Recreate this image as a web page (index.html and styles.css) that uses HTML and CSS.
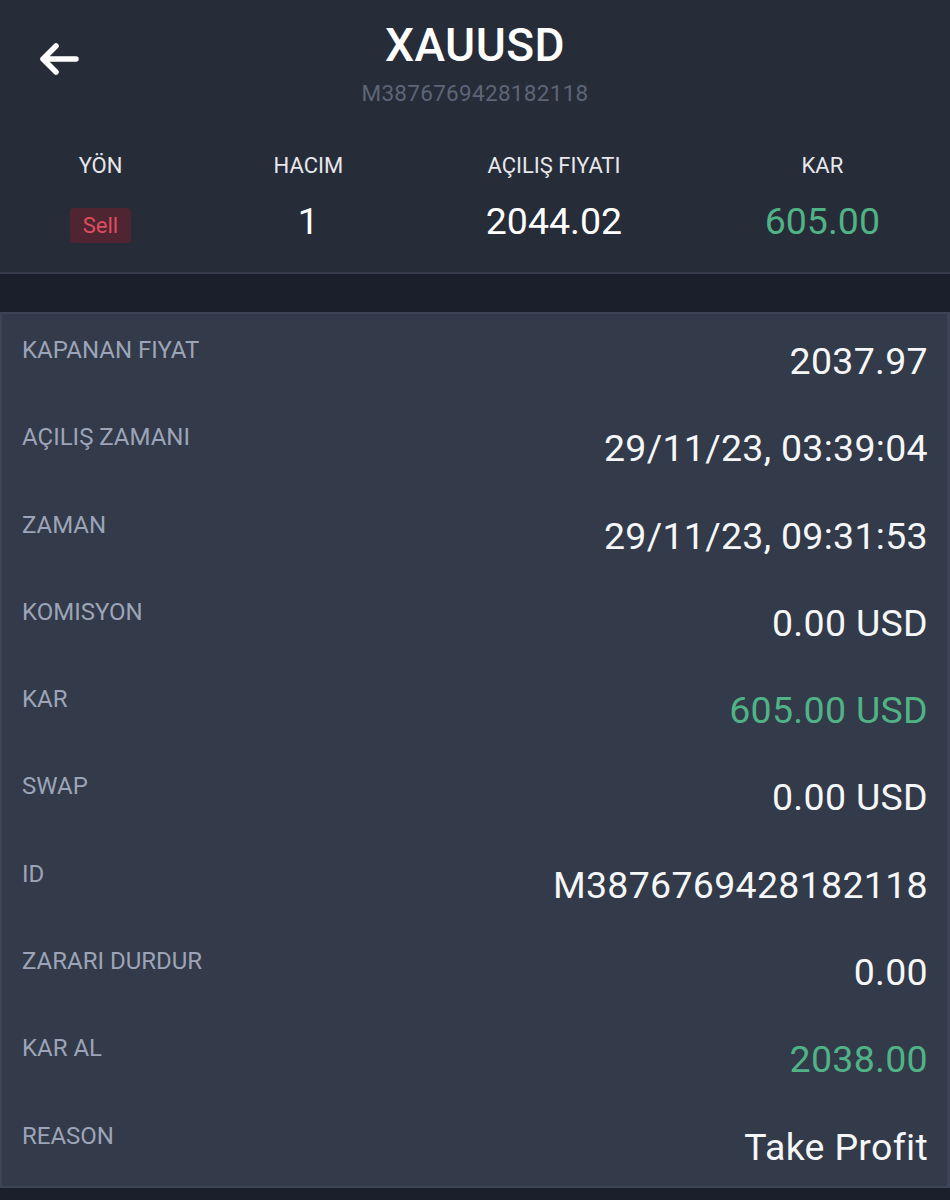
FILE: index.html
```
<!DOCTYPE html>
<html lang="tr">
<head>
<meta charset="utf-8">
<title>XAUUSD</title>
<link rel="stylesheet" href="styles.css">
</head>
<body>
<div class="page">
  <header class="head">
    <div class="titlebar">
      <span class="back">
        <svg width="42" height="34" viewBox="0 0 42 34" aria-hidden="true">
          <path d="M38 17H5M18 4L5 17L18 30" fill="none" stroke="#ffffff" stroke-width="5.5" stroke-linecap="round" stroke-linejoin="round"/>
        </svg>
      </span>
      <h1 class="symbol">XAUUSD</h1>
      <div class="order-id">M3876769428182118</div>
    </div>
    <div class="summary">
      <div class="col">
        <div class="col-label">YÖN</div>
        <div class="col-value"><span class="badge-sell">Sell</span></div>
      </div>
      <div class="col">
        <div class="col-label">HACIM</div>
        <div class="col-value">1</div>
      </div>
      <div class="col">
        <div class="col-label">AÇILIŞ FIYATI</div>
        <div class="col-value">2044.02</div>
      </div>
      <div class="col">
        <div class="col-label">KAR</div>
        <div class="col-value green">605.00</div>
      </div>
    </div>
  </header>
  <div class="spacer"></div>
  <section class="panel">
    <div class="row"><span class="label">KAPANAN FIYAT</span><span class="value">2037.97</span></div>
    <div class="row"><span class="label">AÇILIŞ ZAMANI</span><span class="value">29/11/23, 03:39:04</span></div>
    <div class="row"><span class="label">ZAMAN</span><span class="value">29/11/23, 09:31:53</span></div>
    <div class="row"><span class="label">KOMISYON</span><span class="value">0.00 USD</span></div>
    <div class="row"><span class="label">KAR</span><span class="value green">605.00 USD</span></div>
    <div class="row"><span class="label">SWAP</span><span class="value">0.00 USD</span></div>
    <div class="row"><span class="label">ID</span><span class="value">M3876769428182118</span></div>
    <div class="row"><span class="label">ZARARI DURDUR</span><span class="value">0.00</span></div>
    <div class="row"><span class="label">KAR AL</span><span class="value green">2038.00</span></div>
    <div class="row"><span class="label">REASON</span><span class="value">Take Profit</span></div>
  </section>
  <div class="footer-band"></div>
</div>
</body>
</html>
```
FILE: styles.css
```
* { box-sizing: border-box; }
html, body {
  margin: 0;
  padding: 0;
  background: #1b1f2b;
}
body {
  font-family: Roboto, "Liberation Sans", sans-serif;
  color: #f3f4f7;
}
.page {
  width: 950px;
  height: 1200px;
  overflow: hidden;
  background: #1b1f2b;
}
.head {
  background: #272c39;
  height: 274px;
  border-bottom: 2px solid #363c4b;
}
.titlebar {
  position: relative;
  height: 128px;
  display: flex;
  flex-direction: column;
  align-items: center;
  padding-top: 17px;
}
.back {
  position: absolute;
  left: 38px;
  top: 42px;
  display: block;
  width: 42px;
  height: 34px;
}
.back svg { display: block; }
.symbol {
  margin: 0;
  font-size: 46px;
  font-weight: 500;
  line-height: 56px;
  color: #ffffff;
  letter-spacing: 0.5px;
}
.order-id {
  margin-top: 7px;
  font-size: 22.5px;
  line-height: 26px;
  color: #5e6576;
  letter-spacing: 0.3px;
}
.summary {
  display: flex;
  justify-content: space-between;
  padding: 0 70px;
}
.col {
  display: flex;
  flex-direction: column;
  align-items: center;
}
.col-label {
  font-size: 22px;
  line-height: 26px;
  color: #e6e8ec;
  margin-top: 25px;
}
.col-value {
  margin-top: 20px;
  height: 44px;
  display: flex;
  align-items: center;
  font-size: 37.5px;
  font-weight: 400;
  color: #ffffff;
}
.badge-sell {
  display: inline-block;
  width: 61px;
  height: 35px;
  line-height: 35px;
  text-align: center;
  font-size: 22px;
  font-weight: 400;
  color: #df4d5e;
  background: #4f2532;
  border-radius: 4px;
  margin-top: 8px;
}
.green { color: #4fb386 !important; }
.spacer { height: 38px; }
.panel {
  background: #333a49;
  border: 2px solid #3d4456;
  border-right-width: 3px;
  height: 876px;
}
.row {
  height: 87.3px;
  display: flex;
  justify-content: space-between;
  align-items: flex-start;
  padding: 21px 19px 0 20px;
}
.label {
  font-size: 24px;
  line-height: 30px;
  color: #9ca4b7;
}
.value {
  font-size: 37.5px;
  line-height: 40px;
  margin-top: 6px;
  color: #f5f6f8;
  letter-spacing: 0.3px;
}
.footer-band { height: 12px; }
```
